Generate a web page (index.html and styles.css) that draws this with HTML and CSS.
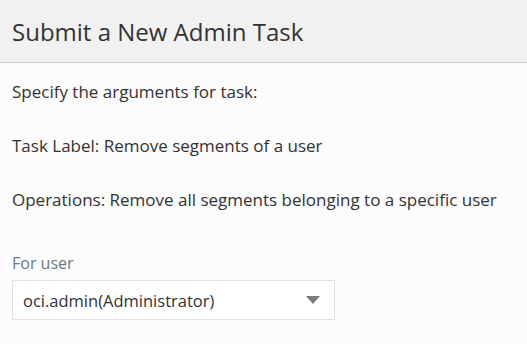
FILE: index.html
```html
<!DOCTYPE html>
<html lang="en">
<head>
    <meta charset="UTF-8">
    <title>Submit a New Admin Task</title>
    <link rel="stylesheet" href="styles.css">
</head>
<body>

<div class="dialog">
    <div class="dialog-header">
        <h2>Submit a New Admin Task</h2>
    </div>
    <div class="dialog-body">
        <p>Specify the arguments for task:</p>
        <p>Task Label: Remove segments of a user</p>
        <p>Operations: Remove all segments belonging to a specific user</p>

        <div class="field">
            <label for="user">For user</label>
            <div class="select">
                <span class="select-value">oci.admin(Administrator)</span>
                <span class="select-arrow"></span>
            </div>
        </div>
    </div>
</div>

</body>
</html>
```

FILE: styles.css
```css
body {
    font-family: "Open Sans", sans-serif;
    background-color: #fcfcfc;
    color: #333;
    margin: 0;
    padding: 0;
}

.dialog-header {
    height: 62px;
    background-color: #f1f1f1;
    border-bottom: 1px solid #cfcfcf;
    display: flex;
    align-items: center;
    padding: 0 12px;
}

h2 {
    margin: 0;
    font-size: 24px;
    font-weight: normal;
    color: #333;
}

.dialog-body {
    padding: 18px 12px;
}

p {
    margin: 0 0 32px;
    font-size: 17px;
    line-height: 22px;
}

.field {
    padding-top: 9px;
}

.field label {
    display: block;
    color: #6e7a7d;
    font-size: 16px;
    line-height: 22px;
    margin-bottom: 6px;
}

.select {
    width: 323px;
    height: 40px;
    box-sizing: border-box;
    border: 1px solid #e2e2e2;
    background-color: #fff;
    display: flex;
    align-items: center;
    justify-content: space-between;
    padding: 0 14px 0 10px;
    font-size: 16.5px;
}

.select-arrow {
    width: 0;
    height: 0;
    border-left: 7px solid transparent;
    border-right: 7px solid transparent;
    border-top: 8px solid #7b7b7b;
}
```
